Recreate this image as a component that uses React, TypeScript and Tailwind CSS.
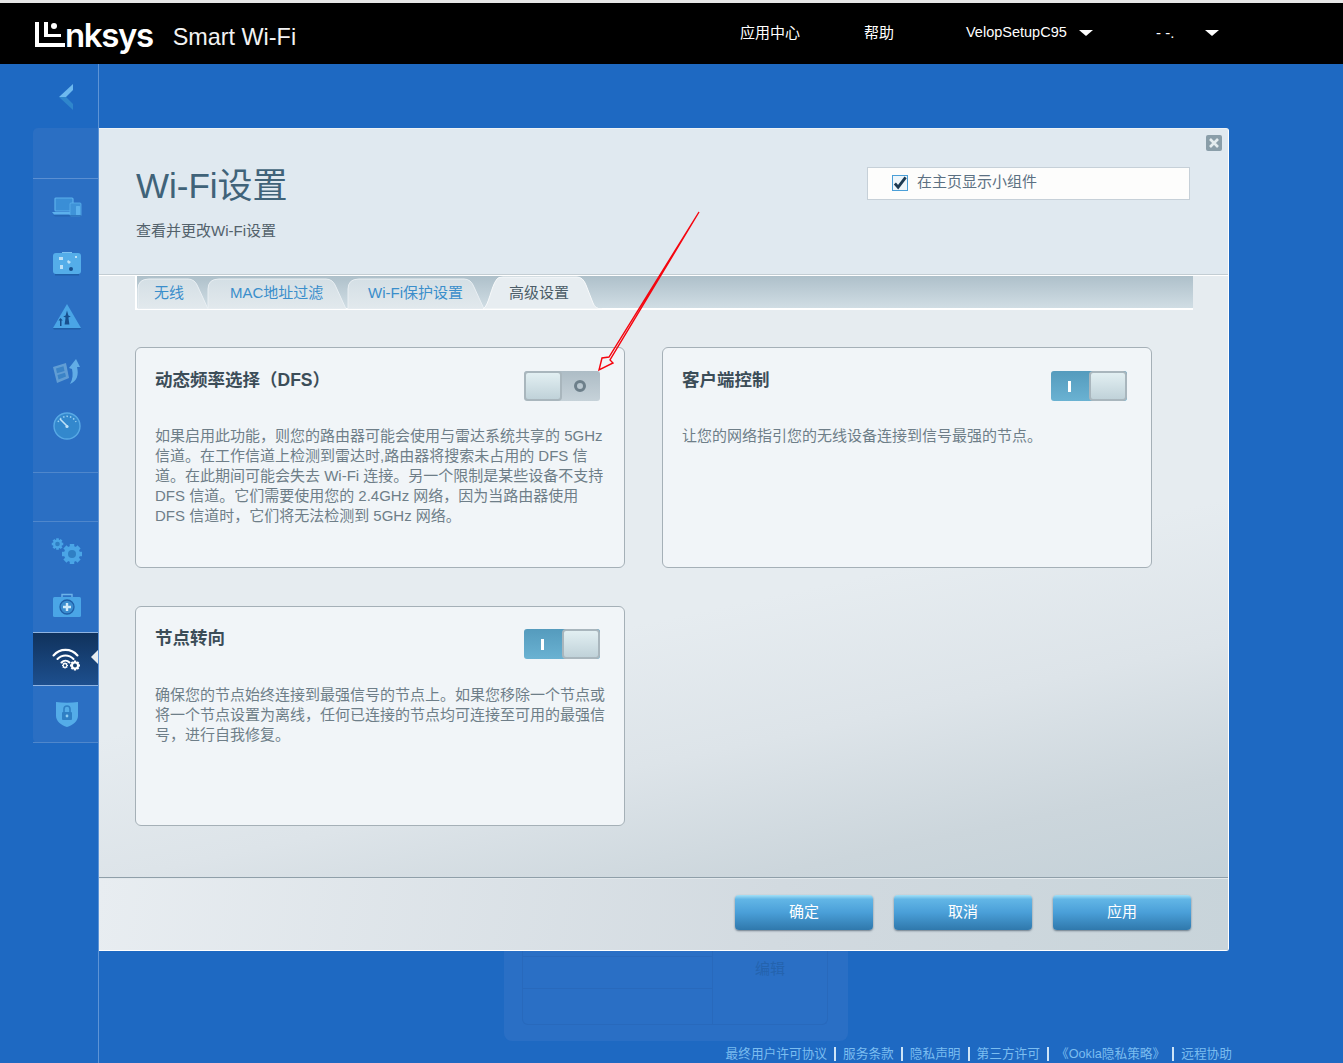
// App.tsx
const font = "font-['Liberation_Sans','Noto_Sans_CJK_SC',sans-serif]"

const ICON_FILL = '#4aa5e6'
const ICON_DARK = '#2f7fc4'

function DevicesIcon() {
  return (
    <svg width="30" height="24" viewBox="0 0 30 24">
      <rect x="3" y="2" width="18" height="13" rx="1" fill="#3a8ed6" stroke="#5cb0ec" strokeWidth="1.2" />
      <path d="M0 16h21v2.4H2z" fill="#5cb0ec" />
      <rect x="18" y="7" width="11" height="13" rx="1" fill="#3f93d8" stroke="#5cb0ec" strokeWidth="0.8" />
      <rect x="24" y="10" width="4" height="9" rx="0.5" fill="#5cb0ec" />
      <path d="M1 19h28v1.5H3z" fill="#1f5fa8" opacity="0.6" />
    </svg>
  )
}

function CaseIcon() {
  return (
    <svg width="30" height="26" viewBox="0 0 30 26">
      <path d="M10 2h10v2H10z" fill="#7cc2f2" />
      <rect x="1" y="3" width="28" height="21" rx="3" fill="#54ade9" />
      <path d="M3 24h24v1.5H3z" fill="#1f5fa8" />
      <path d="M7 7h4v3H7zM16 10l3 2-2 2-2-2zM8 15h3v4H8zM23 6h2v2h-2z" fill="#d7eefb" opacity="0.8" />
      <circle cx="19" cy="19" r="2" fill="#174f8e" />
    </svg>
  )
}

function TriangleIcon() {
  return (
    <svg width="30" height="28" viewBox="0 0 30 28">
      <path d="M15 1 29 25H1z" fill="#4aa5e6" />
      <path d="M1 25h28l-1 1.5H2z" fill="#1f5fa8" />
      <path d="M15 7.5l1.4 5 2.4 1-2.4 1 1 7h-4.8l1-7-2.4-1 2.4-1zM8.500 15l2.300 2.500H9.500V23H8v-5.500H6.500z" fill="#174f8e" />
    </svg>
  )
}

function RestoreIcon() {
  return (
    <svg width="30" height="28" viewBox="0 0 30 28">
      <path d="M1 9l13-4 3 15-12 5z" fill="#6fa9d8" opacity="0.8" />
      <path d="M4 10.500l7.500-2.300 1 4.800-7.500 2.300zM5.500 17l7.500-2.300 1 3.800-7.500 3z" fill="#3b83c6" />
      <path d="M17 10l7-9 4 8h-3c2 8 0 14-7 17 3-5 3-10 2-15z" fill="#62ade6" />
    </svg>
  )
}

function GaugeIcon() {
  return (
    <svg width="28" height="28" viewBox="0 0 28 28">
      <circle cx="14" cy="14" r="13" fill="#3388cd" stroke="#58a9e5" strokeWidth="1.4" />
      <path d="M5 10a10 10 0 0 1 18 0" fill="none" stroke="#9bd0f2" strokeWidth="1.5" strokeDasharray="1.5 2" />
      <path d="M7 7l7.500 7.500" stroke="#bfe2f7" strokeWidth="1.6" />
      <circle cx="14" cy="14.500" r="1.600" fill="#bfe2f7" />
    </svg>
  )
}

function Gear({ cx, cy, r, fill, hole }: { cx: number; cy: number; r: number; fill: string; hole: string }) {
  const teeth = [0, 45, 90, 135]
  return (
    <g>
      {teeth.map((a) => (
        <rect
          key={a}
          x={cx - r * 0.28}
          y={cy - r * 1.25}
          width={r * 0.56}
          height={r * 2.5}
          fill={fill}
          transform={`rotate(${a} ${cx} ${cy})`}
        />
      ))}
      <circle cx={cx} cy={cy} r={r} fill={fill} />
      <circle cx={cx} cy={cy} r={r * 0.5} fill={hole} />
    </g>
  )
}

function GearsIcon() {
  return (
    <svg width="32" height="28" viewBox="0 0 32 28">
      <Gear cx={6.5} cy={7} r={4.6} fill={ICON_FILL} hole={ICON_DARK} />
      <Gear cx={21} cy={17} r={8} fill={ICON_FILL} hole={ICON_DARK} />
    </svg>
  )
}

function MedkitIcon() {
  return (
    <svg width="30" height="26" viewBox="0 0 30 26">
      <path d="M10 4V1.500h10V4" fill="none" stroke="#6db4ea" strokeWidth="1.4" />
      <rect x="1" y="4" width="28" height="20" rx="1.500" fill={ICON_FILL} />
      <circle cx="15" cy="14" r="7" fill="#3a8ccf" stroke="#1f5fa8" strokeWidth="1.300" />
      <path d="M13.800 10h2.400v2.800H19v2.400h-2.800V18h-2.400v-2.800H11v-2.400h2.800z" fill="#cfeafa" />
    </svg>
  )
}

function WifiGearIcon() {
  return (
    <svg width="30" height="26" viewBox="0 0 30 26">
      <g fill="none" stroke="#fff" strokeWidth="2.100" strokeLinecap="round">
        <path d="M1.500 9.500C8 2 19 2 25.500 9.500" />
        <path d="M5.500 13C10 8.300 17 8.300 21.500 13" />
        <path d="M9.500 16.500c2.400-2.400 5.600-2.400 8 0" />
      </g>
      <Gear cx={13} cy={19.5} r={2.4} fill="#fff" hole="#17416f" />
      <Gear cx={23} cy={19.5} r={4} fill="#fff" hole="#17416f" />
    </svg>
  )
}

function ShieldIcon() {
  return (
    <svg width="24" height="28" viewBox="0 0 24 28">
      <path d="M1 2c7 1 15 1 22 0v14c0 5-5 9-11 11C6 25 1 21 1 16z" fill="#54ace8" />
      <rect x="7" y="12" width="10" height="8" rx="1" fill="#2f7fc4" />
      <path d="M9 12V9a3 3 0 0 1 6 0v3" fill="none" stroke="#2f7fc4" strokeWidth="1.600" />
      <circle cx="12" cy="16" r="1.400" fill="#8fcdf2" />
    </svg>
  )
}

function SideItem({ children }: { children: React.ReactNode }) {
  return <div className="h-[54.5px] flex items-center justify-center pl-[2px]">{children}</div>
}

function Sidebar() {
  return (
    <aside className="w-[99px] shrink-0 border-r border-[#5d94d6]">
      <div className="h-[64px] flex items-center justify-center pl-[33px] pt-[1px]">
        <svg width="16" height="28" viewBox="0 0 16 28">
          <path d="M15 1 1 14h7l7-7z" fill="#6db9ef" />
          <path d="M1 14l14 13v-6l-7-7z" fill="#2f86cc" />
        </svg>
      </div>
      <div className="ml-[33px] w-[65px] h-[615px] bg-[#2b6fc3] rounded-tl-[5px] rounded-bl-[5px] flex flex-col">
        <div className="h-[51px] border-b border-[#5a8fd2]" />
        <div className="h-[294px] border-b border-[#4f87cc] pt-[2px]">
          <SideItem><DevicesIcon /></SideItem>
          <SideItem><CaseIcon /></SideItem>
          <SideItem><TriangleIcon /></SideItem>
          <SideItem><RestoreIcon /></SideItem>
          <SideItem><GaugeIcon /></SideItem>
        </div>
        <div className="h-[49px] border-b border-[#4f87cc]" />
        <div className="h-[110px] pt-[2px]">
          <SideItem><GearsIcon /></SideItem>
          <SideItem><MedkitIcon /></SideItem>
        </div>
        <div className="h-[54px] relative border-y border-[#8fb4e2] bg-[linear-gradient(#10325c,#1d4f8e)] flex items-center justify-center pl-[2px]">
          <WifiGearIcon />
          <div className="absolute right-0 top-[17px] w-0 h-0 border-y-[7px] border-y-transparent border-r-[7px] border-r-[#e7edf1]" />
        </div>
        <div className="flex-1 border-b border-[#4f87cc] flex items-center justify-center pl-[2px]">
          <ShieldIcon />
        </div>
      </div>
    </aside>
  )
}

const tabs = [
  { label: '无线', w: 75, text: 'pl-[17px] w-[75px]' },
  { label: 'MAC地址过滤', w: 143, text: 'pl-[23px] w-[143px] ml-[-5px]' },
  { label: 'Wi-Fi保护设置', w: 141, text: 'pl-[21px] w-[141px] ml-[-3px]' },
]

function Tab({ label, w, text }: { label: string; w: number; text: string }) {
  const id = `tab-${w}`
  return (
    <div className={`relative h-[33px] ${text} text-[15px] leading-[33px] text-[#3a8ecb]`}>
      <svg className="absolute inset-0" width={w} height="33" viewBox={`0 0 ${w} 33`}>
        <defs>
          <linearGradient id={id} x1="0" x2="0" y1="0" y2="1">
            <stop offset="0" stopColor="#d4dfe5" />
            <stop offset="1" stopColor="#e2e9ed" />
          </linearGradient>
        </defs>
        <path
          d={`M1 33V13Q1 3 12 3H${w - 24}Q${w - 17} 3 ${w - 14} 11L${w - 4} 33Z`}
          fill={`url(#${id})`}
          stroke="#e9eff3"
          strokeWidth="1"
        />
      </svg>
      <span className="relative">{label}</span>
    </div>
  )
}

function ActiveTab() {
  return (
    <div className="relative h-[33px] w-[119px] ml-[-5px] pl-[26px] text-[15px] leading-[33px] text-[#4c5d68]">
      <svg className="absolute inset-0" width="119" height="33" viewBox="0 0 119 33">
        <path d="M0 33C6 30 8 10 14 3Q15 1 20 1H94Q100 1 103 9L110 27Q112 33 119 33Z" fill="#e7edf1" stroke="#f8fafb" strokeWidth="1" />
      </svg>
      <span className="relative">高级设置</span>
    </div>
  )
}

function Toggle({ on }: { on: boolean }) {
  const knob = (
    <div className="w-[38px] h-[30px] rounded-[4px] border-2 border-[#a9b6bd] bg-[linear-gradient(#e2eff2,#c0d2d9)]" />
  )
  if (on) {
    return (
      <div className="w-[76px] h-[30px] flex shrink-0 rounded-[3px] bg-[linear-gradient(#559bbd,#6ab2d2)]">
        <div className="flex-1 flex items-center justify-center pr-[2px]">
          <div className="w-[3px] h-[11px] bg-white" />
        </div>
        {knob}
      </div>
    )
  }
  return (
    <div className="w-[76px] h-[30px] flex shrink-0 rounded-[3px] bg-[linear-gradient(#adbcc5,#c6d2d9)]">
      {knob}
      <div className="flex-1 flex items-center justify-center pr-[3px]">
        <div className="w-[12px] h-[12px] rounded-full border-[3px] border-[#6d7f8a]" />
      </div>
    </div>
  )
}

function Card({ title, on, compact, children }: { title: string; on: boolean; compact?: boolean; children: React.ReactNode }) {
  return (
    <div className={`rounded-[6px] border border-[#a5b0b7] bg-[#f1f5f8] px-[19px] ${compact ? 'h-[220px] pt-[22px]' : 'h-[221px] pt-[23px]'}`}>
      <div className="flex justify-between items-start pr-[5px]">
        <h3 className="text-[17.5px] leading-[18px] font-bold text-[#3c4d58]">{title}</h3>
        <Toggle on={on} />
      </div>
      <p className={`text-[15px] leading-[20px] text-[#6e7e88] whitespace-nowrap ${compact ? 'mt-[26px]' : 'mt-[25px]'}`}>{children}</p>
    </div>
  )
}

function ModalButton({ label }: { label: string }) {
  return (
    <button className="w-[138px] h-[35px] rounded-[4px] text-[15px] text-white bg-[linear-gradient(#a3e0f6_0%,#62b6e6_12%,#4a9fd8_50%,#2f78ac_100%)] shadow-[0_1px_2px_rgba(40,60,80,0.6)]">
      {label}
    </button>
  )
}

function Modal() {
  return (
    <div className="relative w-[1130px] h-[823px] bg-[#e0e9f0] border-t border-[#eef3f6] border-r border-r-white border-b border-b-white rounded-tr-[3px] rounded-br-[3px] flex flex-col">
      <div className="h-[146px] shrink-0 border-b border-[#c3cdd3] pl-[37px] pt-[31px] flex justify-between pr-[38px]">
        <div>
          <h1 className="text-[35px] leading-[52px] text-[#406379]">Wi-Fi设置</h1>
          <p className="mt-[7px] text-[15px] leading-[24px] text-[#53626c]">查看并更改Wi-Fi设置</p>
        </div>
        <label className="mt-[7px] w-[323px] h-[33px] bg-[#fdfdfc] border border-[#c6d0d8] flex items-center pl-[24px] pb-[2px]">
          <span className="w-[16px] h-[16px] border border-[#4a9fd8] bg-[#eef6fb] flex items-center justify-center">
            <svg width="15" height="14" viewBox="0 0 15 14">
              <path d="M2 7.500l3.500 4L13.500 1" fill="none" stroke="#1d3a52" strokeWidth="3" />
            </svg>
          </span>
          <span className="ml-[9px] text-[15px] text-[#5b7082]">在主页显示小组件</span>
        </label>
      </div>
      <button className="absolute top-[6px] right-[6px] w-[16px] h-[16px] bg-[#8a9ea9] rounded-[2px] flex items-center justify-center">
        <svg width="12" height="12" viewBox="0 0 12 12">
          <path d="M2 2l8 8M10 2l-8 8" stroke="#e4ecef" strokeWidth="2.6" />
        </svg>
      </button>

      <div className="flex-1 min-h-0 border-t border-white bg-[linear-gradient(168deg,#e6ecf0_0%,#e6ecf0_55%,#dde4e9_72%,#ccd6dc_88%,#c4d1d8_100%)] pl-[36px]">
        <div className="w-[1058px] h-[34px] flex border-l-2 border-b-2 border-white bg-[linear-gradient(#aec0ca,#d0dde4)]">
          <Tab {...tabs[0]} />
          <Tab {...tabs[1]} />
          <Tab {...tabs[2]} />
          <ActiveTab />
        </div>
        <div className="mt-[37px] w-[1017px] grid grid-cols-[490px_490px] gap-x-[37px] gap-y-[38px]">
          <Card title="动态频率选择（DFS）" on={false}>
            如果启用此功能，则您的路由器可能会使用与雷达系统共享的 5GHz<br />
            信道。在工作信道上检测到雷达时,路由器将搜索未占用的 DFS 信<br />
            道。在此期间可能会失去 Wi-Fi 连接。另一个限制是某些设备不支持<br />
            DFS 信道。它们需要使用您的 2.4GHz 网络，因为当路由器使用<br />
            DFS 信道时，它们将无法检测到 5GHz 网络。
          </Card>
          <Card title="客户端控制" on={true}>
            让您的网络指引您的无线设备连接到信号最强的节点。
          </Card>
          <Card title="节点转向" on={true} compact>
            确保您的节点始终连接到最强信号的节点上。如果您移除一个节点或<br />
            将一个节点设置为离线，任何已连接的节点均可连接至可用的最强信<br />
            号，进行自我修复。
          </Card>
        </div>
      </div>

      <div className="h-[73px] shrink-0 border-t border-[#8f9fa9] shadow-[inset_0_1px_0_#e2e8ec] bg-[linear-gradient(100deg,#e8edf1_0%,#d2dae0_60%,#c8d4da_100%)] flex justify-end items-start gap-[21px] pr-[37px] pt-[17px]">
        <ModalButton label="确定" />
        <ModalButton label="取消" />
        <ModalButton label="应用" />
      </div>
    </div>
  )
}

const footerLinks = ['最终用户许可协议', '服务条款', '隐私声明', '第三方许可', '《Ookla隐私策略》', '远程协助']

export default function App() {
  return (
    <div className={`relative h-[1063px] w-[1343px] overflow-hidden bg-[#1e69c2] ${font}`}>
      <header className="h-[64px] bg-black border-t-[3px] border-[#e6e6e6] flex items-center text-white">
        <div className="w-[740px] pl-[35px] flex items-center">
          <svg width="30" height="30" viewBox="0 0 30 30" className="mt-[3px]">
            <path d="M0 2h4v21h26v4H0zM9 2h4v12h13v3H9z" fill="#fff" />
            <circle cx="19" cy="6" r="3" fill="#fff" />
          </svg>
          <span className="text-[33px] leading-[44px] font-semibold tracking-[-1.4px] font-['Inter',sans-serif] mt-[3px] mr-[20px]">nksys</span>
          <span className="text-[23.4px] text-[#f2f2f2] mt-[8px]">Smart Wi-Fi</span>
        </div>
        <nav className="flex items-center text-[15px] -mt-[1px]">
          <span className="w-[124px]">应用中心</span>
          <span className="w-[102px]">帮助</span>
          <span className="w-[190px] flex items-center text-[14.5px]">
            VelopSetupC95
            <span className="ml-[12px] w-0 h-0 border-x-[7px] border-x-transparent border-t-[6px] border-t-white" />
          </span>
          <span className="flex items-center">
            - -.
            <span className="ml-[31px] w-0 h-0 border-x-[7px] border-x-transparent border-t-[6px] border-t-white" />
          </span>
        </nav>
      </header>
      <div className="flex h-[999px]">
        <Sidebar />
        <main className="flex-1 min-w-0 pt-[64px]">
          <Modal />
          <div className="ml-[405px] w-[344px] h-[90px] bg-[#2a6fc5] rounded-b-[8px] pl-[18px] pr-[20px]">
            <div className="h-[74px] flex border-x border-b border-[#2869bc] rounded-b-[6px]">
              <div className="w-[190px] border-r border-[#2869bc]">
                <div className="h-[6px] border-b border-[#2869bc]" />
                <div className="h-[32px] border-b border-[#2869bc]" />
              </div>
              <div className="flex-1 flex justify-center pt-[7px] text-[15px] leading-[22px] text-[#2463ae]">编辑</div>
            </div>
          </div>
          <footer className="flex justify-end items-center h-[22px] mt-[2px] pr-[111px] gap-[7px] text-[12.7px] leading-[22px] text-[#7bbdf0] whitespace-nowrap">
            {footerLinks.map((l, i) => (
              <span key={l} className="flex items-center gap-[7px]">
                {i > 0 && <span className="w-[2px] h-[14px] bg-[#cde4f7]" />}
                <span>{l}</span>
              </span>
            ))}
          </footer>
        </main>
      </div>
      {/* red annotation arrow drawn on top of the screenshot */}
      <svg className="absolute left-0 top-0 pointer-events-none" width="1343" height="1063" viewBox="0 0 1343 1063">
        <path d="M699 212 609 357 602 358 599 370 613 363 610 360Z" fill="none" stroke="#f5050f" strokeWidth="1.4" />
      </svg>
    </div>
  )
}
